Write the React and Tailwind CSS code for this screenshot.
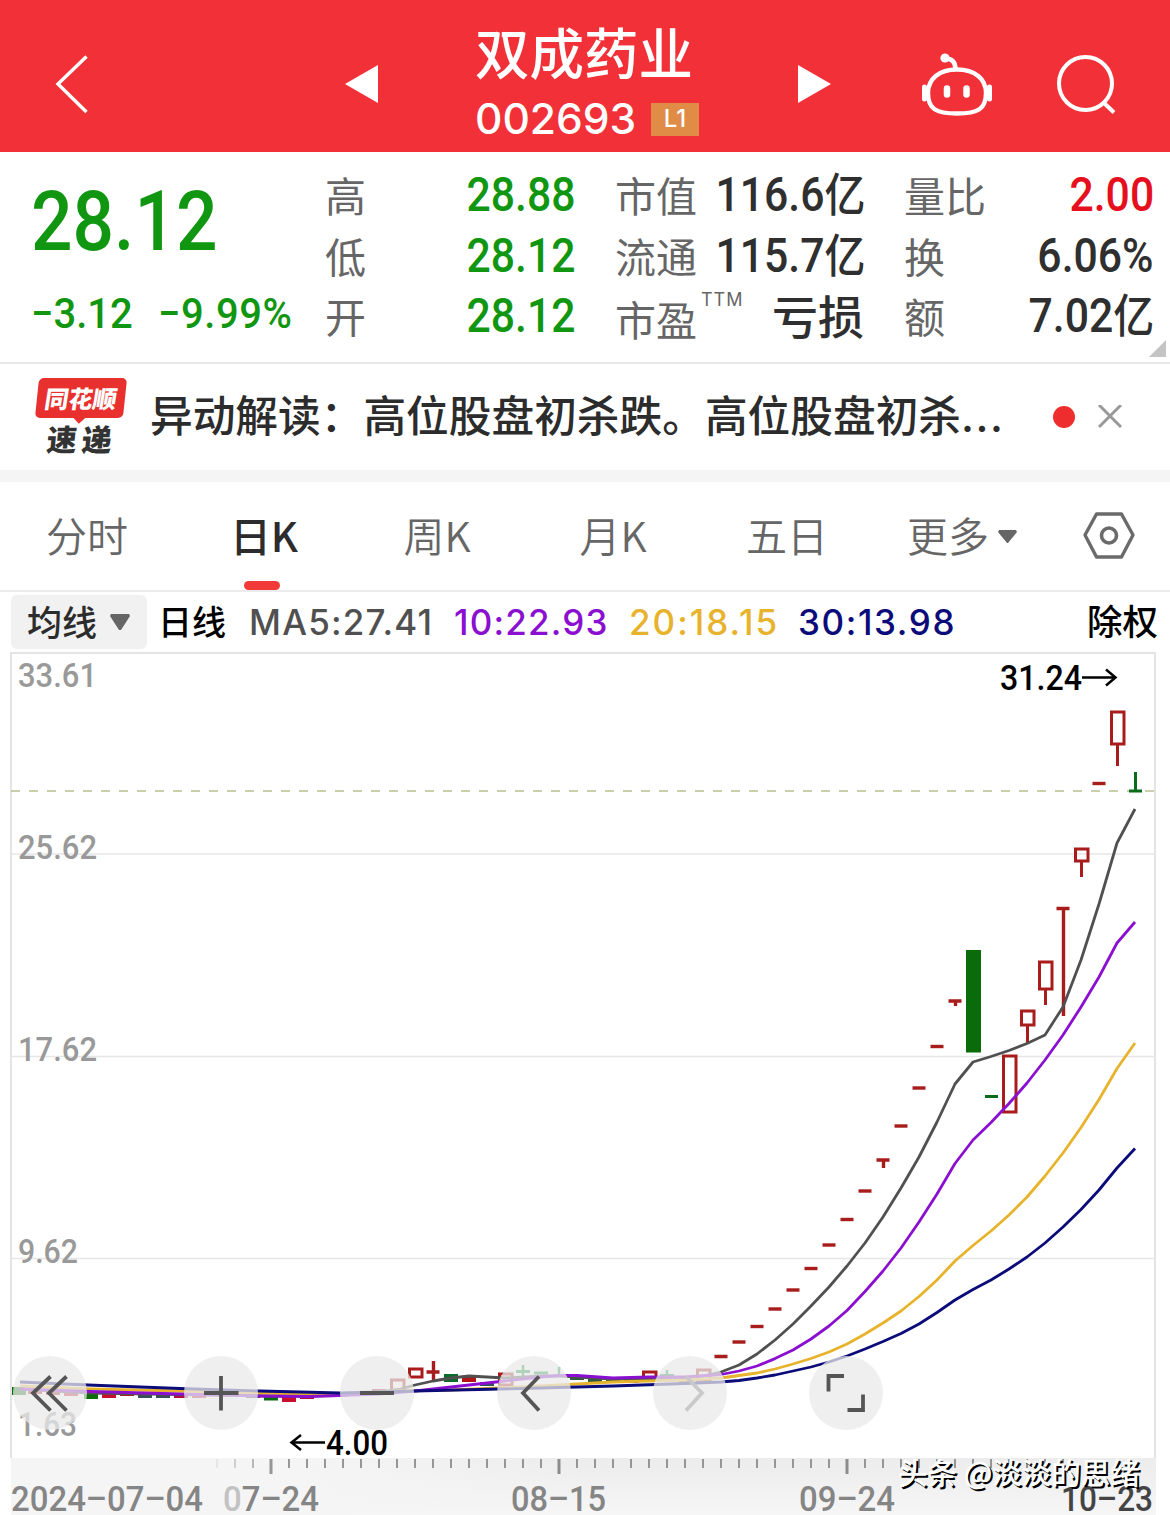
import { useState } from 'react';

const NUM = "font-['Roboto','Noto_Sans_CJK_SC',sans-serif]";
const CJK = "font-['Noto_Sans_CJK_SC',sans-serif]";
const LATIN = "font-['Inter','Noto_Sans_CJK_SC',sans-serif]";

const quoteColumns = [
  [
    { label: '高', value: '28.88', tone: 'text-[#119611]' },
    { label: '低', value: '28.12', tone: 'text-[#119611]' },
    { label: '开', value: '28.12', tone: 'text-[#119611]' },
  ],
  [
    { label: '市值', value: '116.6', unit: '亿', tone: 'text-[#2f2f2f]' },
    { label: '流通', value: '115.7', unit: '亿', tone: 'text-[#2f2f2f]' },
    { label: '市盈', sup: 'TTM', text: '亏损', tone: 'text-[#2f2f2f]' },
  ],
  [
    { label: '量比', value: '2.00', tone: 'text-[#e60f1e]' },
    { label: '换', value: '6.06%', tone: 'text-[#2f2f2f]' },
    { label: '额', value: '7.02', unit: '亿', tone: 'text-[#2f2f2f]' },
  ],
];

const tabs = [
  { label: '分时', width: 'w-[174px]' },
  { label: '日K', width: 'w-[180px]' },
  { label: '周K', width: 'w-[166px]' },
  { label: '月K', width: 'w-[186px]' },
  { label: '五日', width: 'w-[162px]' },
];

// [x, top, bottom, wickBottom]
const hollowCandles = [
  [397, 1380, 1390, 1390],
  [415, 1369, 1377, 1377],
  [505, 1374, 1385, 1385],
  [649, 1372, 1378, 1378],
  [703, 1370, 1381, 1381],
  [1009, 1056, 1112, 1112],
  [1027, 1011, 1025, 1043],
  [1045, 962, 989, 1005],
  [1081, 849, 861, 877],
  [1117, 712, 744, 766],
];

// [x, y, wickTop, wickBottom]
const flatCandles = [
  [433, 1372, 1361, 1382],
  [685, 1382, 1382, 1382],
  [721, 1356.5, 1356, 1357],
  [739, 1342, 1342, 1342],
  [757, 1326.5, 1326, 1326],
  [775, 1309, 1309, 1309],
  [793, 1290, 1290, 1290],
  [811, 1268.5, 1268, 1268],
  [829, 1245, 1245, 1245],
  [847, 1219.5, 1219, 1219],
  [865, 1191, 1191, 1191],
  [883, 1160, 1160, 1168],
  [901, 1126, 1126, 1126],
  [919, 1088, 1088, 1088],
  [937, 1046.5, 1046, 1046],
  [955, 1001, 1001, 1006],
  [1063, 908.5, 908, 1016],
  [1099, 783.5, 783, 783],
];

// [x, y, height, color]
const solidBars = [
  [19, 1387, 8, '#0a6b0a'],
  [35, 1390, 4, '#a81c1c'],
  [53, 1391, 4, '#a81c1c'],
  [71, 1392, 4, '#c8102e'],
  [91, 1393, 6, '#0a6b0a'],
  [109, 1393, 5, '#c8102e'],
  [127, 1393, 3, '#a81c1c'],
  [145, 1394, 4, '#35505a'],
  [163, 1394, 4, '#35505a'],
  [181, 1393, 5, '#b01040'],
  [199, 1394, 4, '#c8102e'],
  [253, 1394, 4, '#35505a'],
  [271, 1396, 4.5, '#0a6b0a'],
  [289, 1396, 6, '#c8102e'],
  [307, 1395, 4, '#b01040'],
  [325, 1393, 4, '#8a1a80'],
  [379, 1389, 4, '#a81c1c'],
  [451, 1374, 8, '#0a6b2a'],
  [469, 1377, 5, '#b31515'],
  [487, 1382, 4, '#35505a'],
  [577, 1376, 4, '#2c5a3c'],
  [595, 1378, 4, '#2c5a3c'],
  [613, 1379, 4, '#2c6a2c'],
  [631, 1377, 6, '#c8102e'],
  [667, 1374, 3, '#0a8b3a'],
  [541, 1371.5, 3, '#0a8b3a'],
  [523, 1370, 3, '#0a8b3a'],
];

const averages = [
  {
    color: '#505050',
    points:
      '20,1389 90,1393 180,1394.5 270,1396 340,1395.5 379,1392 397,1390 415,1385 433,1381 451,1378 469,1376 487,1377 505,1378 541,1376 559,1376 577,1377 613,1379 649,1379 685,1378 703,1376 721,1372 739,1365 757,1354 775,1340 793,1324 811,1306 829,1287 847,1266 865,1243 883,1217 901,1188 919,1157 937,1122 955,1084 973,1062 991,1056.5 1009,1050.5 1027,1043.5 1045,1035 1063,1007 1081,960 1099,904 1117,843 1135,809',
  },
  {
    color: '#e8b32c',
    points:
      '20,1386 90,1389 180,1391 260,1393 340,1394.5 397,1391 451,1390 541,1386 613,1382 685,1380 721,1378 739,1375.5 757,1373 775,1369 793,1364 811,1358.5 829,1352 847,1344 865,1334 883,1323 901,1311 919,1296.5 937,1280 955,1261 973,1245.5 991,1231 1009,1215 1027,1197 1045,1176 1063,1153 1081,1127.5 1099,1099.5 1117,1068.5 1135,1043',
  },
  {
    color: '#8a0fd0',
    points:
      '20,1389 90,1391.5 180,1394 260,1396 310,1396.5 380,1394 415,1391 451,1387 487,1383 505,1381 541,1377 559,1375.5 577,1375.5 613,1378 649,1377 685,1377 721,1374.5 739,1371 757,1366 775,1358.6 793,1350 811,1339 829,1326 847,1310.5 865,1291.5 883,1271 901,1248 919,1222 937,1194 955,1163.5 973,1140 991,1122.5 1009,1103.5 1027,1083 1045,1060 1063,1035 1081,1007 1099,977 1117,943 1135,922',
  },
  {
    color: '#0b0b7a',
    points:
      '20,1382 88,1385 180,1388.5 260,1391 340,1393 415,1391 541,1388 613,1386 685,1383.5 721,1382 739,1380.5 757,1378 775,1375 793,1371 811,1367 829,1362 847,1356 865,1349 883,1341.5 901,1333.5 919,1324 937,1312.5 955,1300 973,1289.5 991,1280 1009,1269 1027,1257 1045,1243 1063,1227 1081,1209.5 1099,1190 1117,1168 1135,1148.5',
  },
];

const priceLabels = [
  { text: '33.61', y: 687 },
  { text: '25.62', y: 859 },
  { text: '17.62', y: 1061 },
  { text: '9.62', y: 1263, width: 60 },
  { text: '1.63', y: 1436, width: 59 },
];

const dateLabels = [
  { text: '2024–07–04', x: 11, width: 192 },
  { text: '08–15', x: 511, width: 95 },
  { text: '09–24', x: 799, width: 96 },
  { text: '10–23', x: 1061, width: 92, color: '#444' },
];

const ticks = Array.from({ length: 48 }, (_, i) => 217 + i * 18);
const majorTicks = [271, 559, 847];

function QuoteRow({ item }) {
  return (
    <div className="flex h-[60.5px] items-center justify-between whitespace-nowrap">
      <span className={`${CJK} flex text-[41px] leading-none text-[#666] ${item.sup ? 'pt-0.5' : 'pb-[3px]'}`}>
        {item.label}
        {item.sup && (
          <sup className={`${LATIN} -top-[7px] ml-1 text-[18px] leading-none tracking-[1px]`}>{item.sup}</sup>
        )}
      </span>
      {item.text ? (
        <span className={`${CJK} pb-[7px] text-[46px] leading-none font-medium ${item.tone}`}>{item.text}</span>
      ) : (
        <span className={`${NUM} flex origin-right scale-x-[0.89] items-center pb-[2px] text-[48px] leading-none font-medium ${item.tone}`}>
          {item.value}
          {item.unit && <span className="text-[46px]">{item.unit}</span>}
        </span>
      )}
    </div>
  );
}

function Header() {
  return (
    <header className="flex h-[152px] bg-[#f13038] text-white">
      <svg className="mt-[54px] ml-[54px] h-[62px] w-[36px]" viewBox="0 0 36 62" fill="none" stroke="currentColor" strokeWidth="3.4">
        <path d="M32.500 2.500L4 30L32.500 58" />
      </svg>
      <svg className="mt-[64px] ml-[254px] h-[40px] w-[34px]" viewBox="0 0 34 40" fill="currentColor">
        <path d="M1 20L34 1V39Z" />
      </svg>
      <div className="ml-[97px] w-[226px]">
        <h1 className={`${CJK} mt-[23px] text-[54.500px] leading-[56px] font-medium whitespace-nowrap`}>双成药业</h1>
        <div className="mt-[20px] flex items-center">
          <span className={`${LATIN} w-[176px] text-[42.500px] leading-[40px] font-medium`}>002693</span>
          <span className={`${LATIN} flex h-[33px] w-[48px] items-center justify-center bg-[#e08c46] text-[24px] leading-none font-medium`}>L1</span>
        </div>
      </div>
      <svg className="mt-[64px] ml-[96px] h-[40px] w-[34px]" viewBox="0 0 34 40" fill="currentColor">
        <path d="M1 1L34 20L1 39Z" />
      </svg>
      <svg className="mt-[50px] ml-[87px] h-[70px] w-[76px]" viewBox="0 0 76 70" fill="none" stroke="currentColor" strokeWidth="4.4">
        <path d="M39 19.500C57 19.500 68 29 68 43C68 59 60 63.500 39 63.500C18 63.500 10 59 10 43C10 29 21 19.500 39 19.500Z" />
        <path d="M27 8.500C34 8.500 37.500 12 37.500 19" strokeLinecap="round" />
        <circle cx="27" cy="8" r="4.600" fill="currentColor" stroke="none" />
        <path d="M6.500 37V49M71.500 37V49" strokeWidth="5" strokeLinecap="round" />
        <path d="M29 38.500V44.500M48.500 38.500V44.500" strokeWidth="6.5" strokeLinecap="round" />
      </svg>
      <svg className="mt-[52px] ml-[61px] h-[64px] w-[64px]" viewBox="0 0 64 64" fill="none" stroke="currentColor" strokeWidth="4">
        <circle cx="30.500" cy="31.500" r="26.500" />
        <path d="M48.500 50.500L59 60.500" />
      </svg>
    </header>
  );
}

function NewsBar() {
  return (
    <div className="flex h-[106px] items-center">
      <div className="ml-[35px] flex h-[80px] w-[92px] flex-col items-center">
        <div className="relative mt-px flex h-[40px] w-[88px] -skew-x-6 items-center justify-center rounded-[5px] bg-[#e8302e] pb-px">
          <span className={`${CJK} -skew-x-3 text-[24px] leading-none font-black text-white`}>同花顺</span>
          <span className="absolute -bottom-[4px] left-[40px] h-[9px] w-[9px] rotate-45 bg-[#e8302e]" />
        </div>
        <span className={`${CJK} mt-[5px] ml-[1px] -skew-x-6 text-[30px] leading-none font-black tracking-[5px] text-[#333]`}>速递</span>
      </div>
      <p className={`${CJK} ml-[23px] w-[856px] pb-[4px] text-[42.700px] leading-none font-medium whitespace-nowrap text-[#2c2c2c]`}>
        异动解读：高位股盘初杀跌。高位股盘初杀<span className="font-['Inter',sans-serif] tracking-[1.5px]">...</span>
      </p>
      <span className="ml-[47px] h-[22px] w-[22px] rounded-full bg-[#ee2e2e]" />
      <svg className="ml-[23px] h-[24px] w-[24px]" viewBox="0 0 24 24" stroke="#999" strokeWidth="3">
        <path d="M1 0L23 22M23 0L1 22" />
      </svg>
    </div>
  );
}

function PeriodTabs() {
  const [active, setActive] = useState('日K');
  return (
    <nav className={`${CJK} flex h-[108px] text-[41px] leading-none whitespace-nowrap text-[#666]`}>
      {tabs.map((tab) => (
        <button
          key={tab.label}
          onClick={() => setActive(tab.label)}
          className={`relative flex items-center justify-center pb-[3px] ${tab.width} ${tab.label === active ? 'font-medium text-[#2c2c2c]' : 'font-[350]'}`}
        >
          {tab.label}
          {tab.label === active && <span className="absolute bottom-0 left-[70px] h-[9px] w-[36px] rounded-full bg-[#f23b38]" />}
        </button>
      ))}
      <button className="ml-[39px] flex items-center pb-[3px] font-[350]">
        更多
        <svg className="mt-[3px] ml-[9px] h-[13px] w-[19px]" viewBox="0 0 19 13" fill="#666">
          <path d="M1 0H18L19 2L10 13H9L0 2Z" />
        </svg>
      </button>
      <svg className="mt-[29px] ml-[66px] h-[48px] w-[52px]" viewBox="0 0 52 48" fill="none" stroke="#6a6a6a" strokeWidth="3.4" strokeLinejoin="round">
        <path d="M13.500 3H38.500L50 24L38.500 46H13.500L2 24Z" />
        <circle cx="26" cy="24.500" r="7.500" strokeWidth="3.6" />
      </svg>
    </nav>
  );
}

function AverageBar() {
  return (
    <div className={`${LATIN} flex h-[60px] items-center text-[35px] leading-none font-medium tracking-[1.2px] whitespace-nowrap`}>
      <button className={`${CJK} ml-[11px] flex h-[54px] w-[136px] items-center rounded-md bg-[#f1f1f1] pb-[3px] pl-[16px] tracking-normal text-[#2c2c2c]`}>
        均线
        <svg className="mt-[2px] ml-[13px] h-[16px] w-[20px]" viewBox="0 0 20 16" fill="#666">
          <path d="M1 0H19L20 2L11 16H9L0 2Z" />
        </svg>
      </button>
      <span className={`${CJK} ml-[11px] w-[91px] pb-[3px] text-[34px] tracking-normal text-black`}>日线</span>
      <span className="w-[205px] text-[#505050]">MA5:27.41</span>
      <span className="w-[175px] text-[#8a0fd0]">10:22.93</span>
      <span className="w-[169px] tracking-[2px] text-[#e8b32c]">20:18.15</span>
      <span className="tracking-[1.6px] text-[#0b0b7a]">30:13.98</span>
      <span className={`${CJK} mr-[12px] ml-auto pb-[4px] text-[35.500px] tracking-normal text-black`}>除权</span>
    </div>
  );
}

function KLineChart() {
  return (
    <svg className="block h-[863px] w-[1170px]" viewBox="0 652 1170 863" fill="none">
      <defs>
        <linearGradient id="axis" x1="0" y1="0" x2="0" y2="1">
          <stop offset="0" stopColor="#ececec" />
          <stop offset="1" stopColor="#f6f6f6" />
        </linearGradient>
        <linearGradient id="axisFade" x1="0" y1="0" x2="1" y2="0">
          <stop offset="0" stopColor="#f5f5f5" />
          <stop offset="0.250" stopColor="#f5f5f5" />
          <stop offset="0.500" stopColor="#f5f5f5" stopOpacity="0" />
        </linearGradient>
      </defs>
      <path d="M11 1458V653H1155V1458" stroke="#e4e4e4" strokeWidth="2" />
      <path d="M11 854H1155M11 1056.500H1155M11 1258.500H1155" stroke="#e6e6e6" strokeWidth="1.500" />
      <path d="M11 791H1155" stroke="#b9bf8e" strokeWidth="1.600" strokeDasharray="9 9" />

      <g className={NUM} fontSize="34" fontWeight="500" fill="#999">
        {priceLabels.map((label) => (
          <text key={label.text} x="18" y={label.y} textLength={label.width || 79} lengthAdjust="spacingAndGlyphs">
            {label.text}
          </text>
        ))}
      </g>

      {solidBars.map(([x, y, height, color]) => (
        <rect key={x} x={x - 7} y={y} width="14" height={height} fill={color} />
      ))}
      <path d="M523 1365V1377M559 1367V1376M667 1370V1379" stroke="#0a8b3a" strokeWidth="2.500" />
      <g stroke="#a81c1c" strokeWidth="3">
        {hollowCandles.map(([x, top, bottom, wickBottom]) => (
          <g key={x}>
            <rect x={x - 5.5} y={top} width="12.5" height={bottom - top} />
            {wickBottom > bottom && <path d={`M${x + 0.5} ${bottom}V${wickBottom}`} />}
          </g>
        ))}
        {flatCandles.map(([x, y, wickTop, wickBottom]) => (
          <path key={x} d={`M${x - 6.5} ${y}H${x + 6.5}M${x + 0.5} ${wickTop}V${wickBottom}`} strokeWidth="3.400" />
        ))}
      </g>
      <rect x="966" y="950" width="15" height="102.500" fill="#0a6b0a" />
      <path d="M985 1096.500H998M1129 791H1142M1135.500 772V791" stroke="#0a6b1a" strokeWidth="3" />

      {averages.map((line) => (
        <polyline key={line.color} points={line.points} stroke={line.color} strokeWidth="2.800" strokeLinejoin="round" />
      ))}

      <g className={NUM} fontSize="35" fontWeight="500" fill="#000">
        <text x="1000" y="690" textLength="82" lengthAdjust="spacingAndGlyphs">31.24</text>
        <text x="326" y="1455" textLength="62" lengthAdjust="spacingAndGlyphs">4.00</text>
      </g>
      <path d="M1082 677.500H1115M1106 669.500L1115.500 677.500L1106 685.500M325 1442.500H292M301 1435L291.500 1442.500L301 1450" stroke="#000" strokeWidth="2.500" />

      <rect x="11" y="1458" width="1145" height="57" fill="url(#axis)" />
      <rect x="11" y="1458" width="1145" height="57" fill="url(#axisFade)" />
      {ticks.map((x, i) => (
        <path
          key={x}
          d={`M${x} 1459V${majorTicks.includes(x) ? 1474 : 1468}`}
          stroke="#8c8c8c"
          strokeWidth={majorTicks.includes(x) ? 3 : 1.8}
          opacity={Math.min(1, 0.15 + i * 0.25)}
        />
      ))}
      <g className={NUM} fontSize="34.500" fontWeight="500" fill="#858585">
        {dateLabels.map((label) => (
          <text key={label.text} x={label.x} y="1511" fill={label.color} textLength={label.width} lengthAdjust="spacingAndGlyphs">
            {label.text}
          </text>
        ))}
        <text x="223" y="1511" textLength="96" lengthAdjust="spacingAndGlyphs">
          <tspan fill="#c2c2c2">0</tspan>7–24
        </text>
      </g>
    </svg>
  );
}

const controls = [
  { name: '最左', d: 'M37.500 20.500L20 37L37.500 54.500M53.500 20.500L36 37L53.500 54.500', margin: 'ml-[13px]' },
  { name: '放大', d: 'M20 37H54.500M37 20V54.500', margin: 'ml-[97px]' },
  { name: '缩小', d: 'M20 37H54', margin: 'ml-[82px]' },
  { name: '左移', d: 'M42 20.500L26 37L42 54.500', margin: 'ml-[83px]' },
  { name: '右移', d: 'M33 20.500L49 37L33 54.500', margin: 'ml-[82px]', faded: true },
  { name: '全屏', d: 'M35 20H19.500V35.500M54 38.500V54H38.500', margin: 'ml-[82px]' },
];

function ChartControls() {
  return (
    <div className="absolute top-[704px] left-0 flex">
      {controls.map((item) => (
        <button key={item.name} aria-label={item.name} className={`h-[74px] w-[74px] rounded-full bg-[#e9e9e9]/75 ${item.margin}`}>
          <svg
            className="h-[74px] w-[74px]"
            viewBox="0 0 74 74"
            fill="none"
            stroke={item.faded ? '#c9c9c9' : '#555'}
            strokeWidth="3.8"
          >
            <path d={item.d} />
          </svg>
        </button>
      ))}
    </div>
  );
}

export default function App() {
  return (
    <div className="h-[1515px] w-[1170px] overflow-hidden bg-white">
      <Header />
      <section className="relative flex h-[212px] border-b-2 border-[#e8e8e8] pt-[14px]">
        <div className={`${NUM} w-[325px] pl-[31px] font-medium whitespace-nowrap text-[#119611]`}>
          <div className="mt-[14px] origin-left scale-x-[0.870] text-[84px] leading-[84px]">28.12</div>
          <div className="mt-[28px] flex origin-left scale-x-[0.930] gap-[27px] text-[43px] leading-[43px]">
            <span>−3.12</span>
            <span className="tracking-[0.6px]">−9.99%</span>
          </div>
        </div>
        <div className="grid grid-cols-[250px_249px_250px] gap-x-[40px]">
          {quoteColumns.map((column, index) => (
            <div key={index}>
              {column.map((item) => (
                <QuoteRow key={item.label} item={item} />
              ))}
            </div>
          ))}
        </div>
        <svg className="absolute right-[4px] bottom-[5px] h-[17px] w-[17px]" viewBox="0 0 17 17" fill="#c4c4c4">
          <path d="M17 0V17H0Z" />
        </svg>
      </section>
      <NewsBar />
      <div className="h-[12px] bg-[#f5f5f5]" />
      <PeriodTabs />
      <div className="h-[2px] bg-[#ececec]" />
      <AverageBar />
      <div className="relative">
        <KLineChart />
        <ChartControls />
        <span
          className={`${CJK} absolute top-[800px] left-[898px] text-[29.500px] leading-[38px] font-medium whitespace-nowrap text-white [text-shadow:2px_2px_0_#000]`}
        >
          头条 @淡淡的思绪
        </span>
      </div>
    </div>
  );
}
